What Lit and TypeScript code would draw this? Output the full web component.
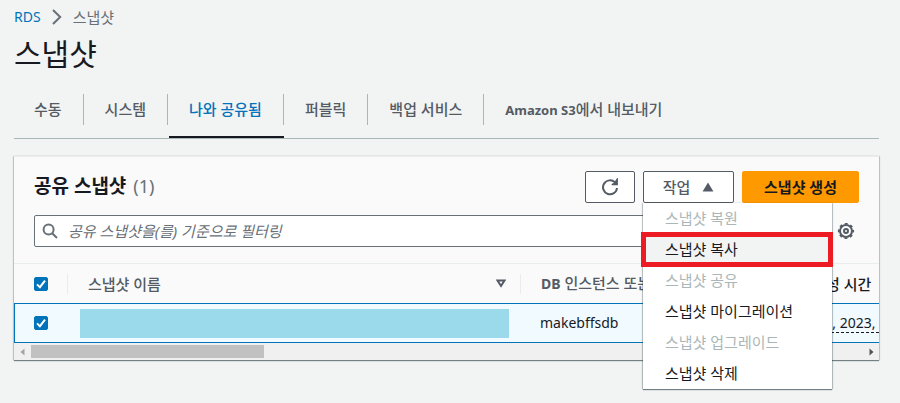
import { LitElement, html, css } from "lit";
import { customElement, state } from "lit/decorators.js";
import { classMap } from "lit/directives/class-map.js";

const TABS = [
  { id: "manual", label: html`수동` },
  { id: "system", label: html`시스템` },
  { id: "shared", label: html`나와 공유됨` },
  { id: "public", label: html`퍼블릭` },
  { id: "backup", label: html`백업 서비스` },
  { id: "export", label: html`<span class="latin">Amazon S3</span>에서 내보내기` },
];

const ACTIONS = [
  { label: "스냅샷 복원", disabled: true, marked: false },
  { label: "스냅샷 복사", disabled: false, marked: true },
  { label: "스냅샷 공유", disabled: true, marked: false },
  { label: "스냅샷 마이그레이션", disabled: false, marked: false },
  { label: "스냅샷 업그레이드", disabled: true, marked: false },
  { label: "스냅샷 삭제", disabled: false, marked: false },
];

@customElement("app-root")
export class AppRoot extends LitElement {
  static styles = css`
    :host {
      display: block;
      min-height: 100vh;
      box-sizing: border-box;
      padding: 6px 21px 12px 14px;
      background: #f2f3f3;
      color: #16191f;
      font-family: "Noto Sans", "Noto Sans CJK KR", sans-serif;
      font-size: 15px;
      line-height: 22px;
      overflow: hidden;
    }
    *, *::before, *::after { box-sizing: border-box; }
    button, input {
      font: inherit;
      color: inherit;
      margin: 0;
      padding: 0;
      border: 0;
      background: none;
    }
    svg { display: block; }
    .latin { font-size: 14px; }
    .crumbs {
      display: flex;
      align-items: center;
      gap: 11px;
      color: #687078;
    }
    .crumbs a {
      color: #0073bb;
      text-decoration: none;
      font-size: 14px;
    }
    h1 {
      margin: 6px 0 0;
      font-size: 30px;
      line-height: 40px;
      font-weight: 400;
    }
    .tabs {
      display: flex;
      margin-top: 13px;
      border-bottom: 1px solid #aab7b8;
    }
    .tab {
      display: flex;
      padding: 7px 0 11px;
      color: #545b64;
      font-weight: 500;
      white-space: nowrap;
      border-bottom: 2px solid transparent;
    }
    .tab .latin { font-weight: 700; font-size: 13px; }
    .tab-text {
      padding: 4px 21px;
      border-right: 1px solid #aab7b8;
    }
    .tab:first-child .tab-text { padding-left: 20px; }
    .tab:last-child .tab-text { border-right-color: transparent; }
    .tab.active { color: #0073bb; position: relative; }
    .tab.active::after {
      content: "";
      position: absolute;
      left: 1px;
      right: 0;
      bottom: -2px;
      height: 2px;
      background: #16191f;
    }
    .card {
      margin-top: 17px;
      background: #fafafa;
      border-top: 1px solid #eaeded;
      box-shadow: 0 1px 1px rgba(0, 28, 36, 0.5), -1px 0 1px rgba(0, 28, 36, 0.15), 1px 0 1px rgba(0, 28, 36, 0.15);
    }
    .head {
      display: flex;
      align-items: center;
      gap: 8px;
      padding: 14px 20px 0;
    }
    h2 {
      flex: 1;
      margin: 0;
      padding-bottom: 2px;
      font-size: 19px;
      line-height: 24px;
      font-weight: 700;
    }
    .count { margin-left: 2px; color: #687078; font-weight: 400; font-size: 18px; }
    .btn {
      display: flex;
      align-items: center;
      justify-content: center;
      height: 32px;
      border: 1px solid #545b64;
      border-radius: 2px;
      background: #fff;
      color: #545b64;
      font-weight: 500;
      white-space: nowrap;
    }
    .refresh { width: 50px; }
    .toggle { gap: 12px; width: 91px; }
    .primary {
      width: 117px;
      border-color: #ff9900;
      background: #ff9900;
      color: #16191f;
      font-weight: 700;
    }
    .actions { position: relative; }
    .menu {
      position: absolute;
      z-index: 2;
      top: 100%;
      left: 0;
      width: 189px;
      margin: 0;
      padding: 0;
      list-style: none;
      background: #fff;
      box-shadow: 0 1px 1px rgba(0, 28, 36, 0.5), -1px 0 1px rgba(0, 28, 36, 0.2), 1px 0 1px rgba(0, 28, 36, 0.2);
    }
    .menu li { position: relative; }
    .item {
      display: block;
      width: 100%;
      height: 31px;
      padding: 0 22px 2px;
      text-align: left;
      white-space: nowrap;
    }
    .item:disabled { color: #aab7b8; }
    .item.marked { background: #f2f3f3; }
    .marked-frame {
      position: absolute;
      inset: -2px -1px -2px -2px;
      border: 5px solid #ed1c24;
      pointer-events: none;
    }
    .tools {
      display: flex;
      align-items: center;
      gap: 24px;
      padding: 12px 24px 16px 20px;
    }
    .search {
      display: flex;
      flex: 1;
      align-items: center;
      gap: 10px;
      height: 32px;
      padding: 0 7px;
      border: 1px solid #687078;
      border-radius: 2px;
      background: #fff;
    }
    .search input { flex: 1; min-width: 0; outline: 0; }
    .search input::placeholder { color: #687078; font-style: italic; opacity: 1; }
    .scroller { overflow: hidden; }
    table {
      width: 1100px;
      table-layout: fixed;
      border-collapse: separate;
      border-spacing: 0;
    }
    .c-check { width: 53px; }
    .c-name { width: 453px; }
    .c-db { width: 226px; }
    th, td {
      height: 40px;
      padding: 0 20px;
      text-align: left;
      white-space: nowrap;
    }
    th { border-top: 1px solid #eaeded; color: #545b64; font-weight: 500; }
    th .latin { font-weight: 700; }
    th.sorted { color: #16191f; }
    td {
      border-top: 1px solid #0073bb;
      border-bottom: 1px solid #0073bb;
      background: #f1faff;
      font-size: 14px;
    }
    td:first-child { border-left: 1px solid #0073bb; padding-left: 19px; }
    th.divided { padding: 0; }
    .th-inner {
      display: flex;
      align-items: center;
      justify-content: space-between;
      height: 20px;
      padding: 0 14px 0 20px;
      border-left: 1px solid #eaeded;
    }
    td.redacted { padding: 0 11px 0 13px; }
    .bar { height: 29px; background: #9bdaeb; }
    .date { border-bottom: 1px dashed #16191f; white-space: pre; }
    .check { display: grid; width: 14px; height: 14px; }
    .check > * { grid-area: 1 / 1; }
    .check input {
      appearance: none;
      width: 14px;
      height: 14px;
      border: 1px solid #879596;
      border-radius: 2px;
      background: #fff;
    }
    .check input:checked { border-color: #0073bb; background: #0073bb; }
    .check svg { pointer-events: none; }
    .track {
      display: flex;
      align-items: center;
      gap: 6px;
      height: 17px;
      padding: 0 5px 0 6px;
      background: #f0f0f0;
    }
    .rail { flex: 1; }
    .thumb { width: 28%; height: 13px; background: #c1c1c1; }
  `;

  @state() private tab = "shared";
  @state() private menuOpen = true;

  private checkbox(label: string) {
    return html`<label class="check">
      <input type="checkbox" checked aria-label=${label} />
      <svg width="14" height="14" viewBox="0 0 14 14" fill="none" stroke="#fff" stroke-width="2">
        <path d="M3 7.4 L5.9 10.2 L11 3.6" />
      </svg>
    </label>`;
  }

  render() {
    return html`
      <nav class="crumbs" aria-label="탐색 경로">
        <a href="#rds">RDS</a>
        <svg width="10" height="16" viewBox="0 0 10 16" fill="none" stroke="#687078" stroke-width="2">
          <path d="M1 1 L8.2 8 L1 15" />
        </svg>
        <span>스냅샷</span>
      </nav>
      <h1>스냅샷</h1>

      <div class="tabs" role="tablist">
        ${TABS.map(
          (t) => html`<button
            class=${classMap({ tab: true, active: t.id === this.tab })}
            role="tab"
            aria-selected=${t.id === this.tab}
            @click=${() => (this.tab = t.id)}
          ><span class="tab-text">${t.label}</span></button>`
        )}
      </div>

      <section class="card">
        <div class="head">
          <h2>공유 스냅샷 <span class="count">(1)</span></h2>
          <button class="btn refresh" aria-label="새로 고침">
            <svg width="18" height="18" viewBox="0 0 18 18" fill="none" stroke="#545b64" stroke-width="2">
              <path d="M16 10 A7 7 0 1 1 14 4.4" />
              <path d="M16.2 1.2 V6.6 H10.8 L13.4 5.4 Z" fill="#545b64" stroke-width="1.4" />
            </svg>
          </button>
          <div class="actions">
            <button
              class="btn toggle"
              aria-expanded=${this.menuOpen}
              @click=${() => (this.menuOpen = !this.menuOpen)}
            >
              작업
              <svg width="12" height="10" viewBox="0 0 12 10"><path d="M6 0.5 L11.4 9.5 H0.6 Z" fill="#545b64" /></svg>
            </button>
            ${this.menuOpen
              ? html`<ul class="menu">
                  ${ACTIONS.map(
                    (a) => html`<li>
                      <button class=${classMap({ item: true, marked: a.marked })} ?disabled=${a.disabled}>${a.label}</button>
                      ${a.marked ? html`<span class="marked-frame"></span>` : ""}
                    </li>`
                  )}
                </ul>`
              : ""}
          </div>
          <button class="btn primary">스냅샷 생성</button>
        </div>

        <div class="tools">
          <label class="search">
            <svg width="16" height="16" viewBox="0 0 16 16" fill="none" stroke="#687078" stroke-width="2">
              <circle cx="6.6" cy="6.6" r="5" />
              <path d="M10.2 10.2 L15 15" />
            </svg>
            <input type="text" aria-label="스냅샷 필터링" placeholder="공유 스냅샷을(를) 기준으로 필터링" />
          </label>
          <button aria-label="기본 설정">
            <svg width="18" height="18" viewBox="0 0 18 18" fill="none" stroke="#545b64">
              <circle cx="9" cy="9" r="6" stroke-width="2" />
              <circle cx="9" cy="9" r="7.3" stroke-width="1.6" stroke-dasharray="2.867 2.867" stroke-dashoffset="1.433" />
              <circle cx="9" cy="9" r="2" stroke-width="2" />
            </svg>
          </button>
        </div>

        <div class="scroller">
          <table>
            <colgroup>
              <col class="c-check" /><col class="c-name" /><col class="c-db" /><col />
            </colgroup>
            <thead>
              <tr>
                <th>${this.checkbox("모두 선택")}</th>
                <th class="divided"><div class="th-inner">
                  스냅샷 이름
                  <svg width="10" height="9" viewBox="0 0 10 9" fill="none" stroke="#545b64" stroke-width="2">
                    <path d="M1.4 1.4 H8.6 L5 7 Z" />
                  </svg>
                </div></th>
                <th class="divided"><div class="th-inner">
                  <span><span class="latin">DB</span> 인스턴스 또는 클러스터</span>
                </div></th>
                <th class="divided sorted"><div class="th-inner">스냅샷 생성 시간</div></th>
              </tr>
            </thead>
            <tbody>
              <tr>
                <td>${this.checkbox("스냅샷 선택")}</td>
                <td class="redacted"><div class="bar"></div></td>
                <td>makebffsdb</td>
                <td><span class="date">August 03, 2023, </span></td>
              </tr>
            </tbody>
          </table>
        </div>
        <div class="track" aria-hidden="true">
          <svg width="5" height="8" viewBox="0 0 5 8"><path d="M4.5 0.5 V7.5 L0.5 4 Z" fill="#a3a3a3" /></svg>
          <div class="rail"><div class="thumb"></div></div>
          <svg width="5" height="8" viewBox="0 0 5 8"><path d="M0.5 0.5 V7.5 L4.5 4 Z" fill="#505050" /></svg>
        </div>
      </section>
    `;
  }
}
